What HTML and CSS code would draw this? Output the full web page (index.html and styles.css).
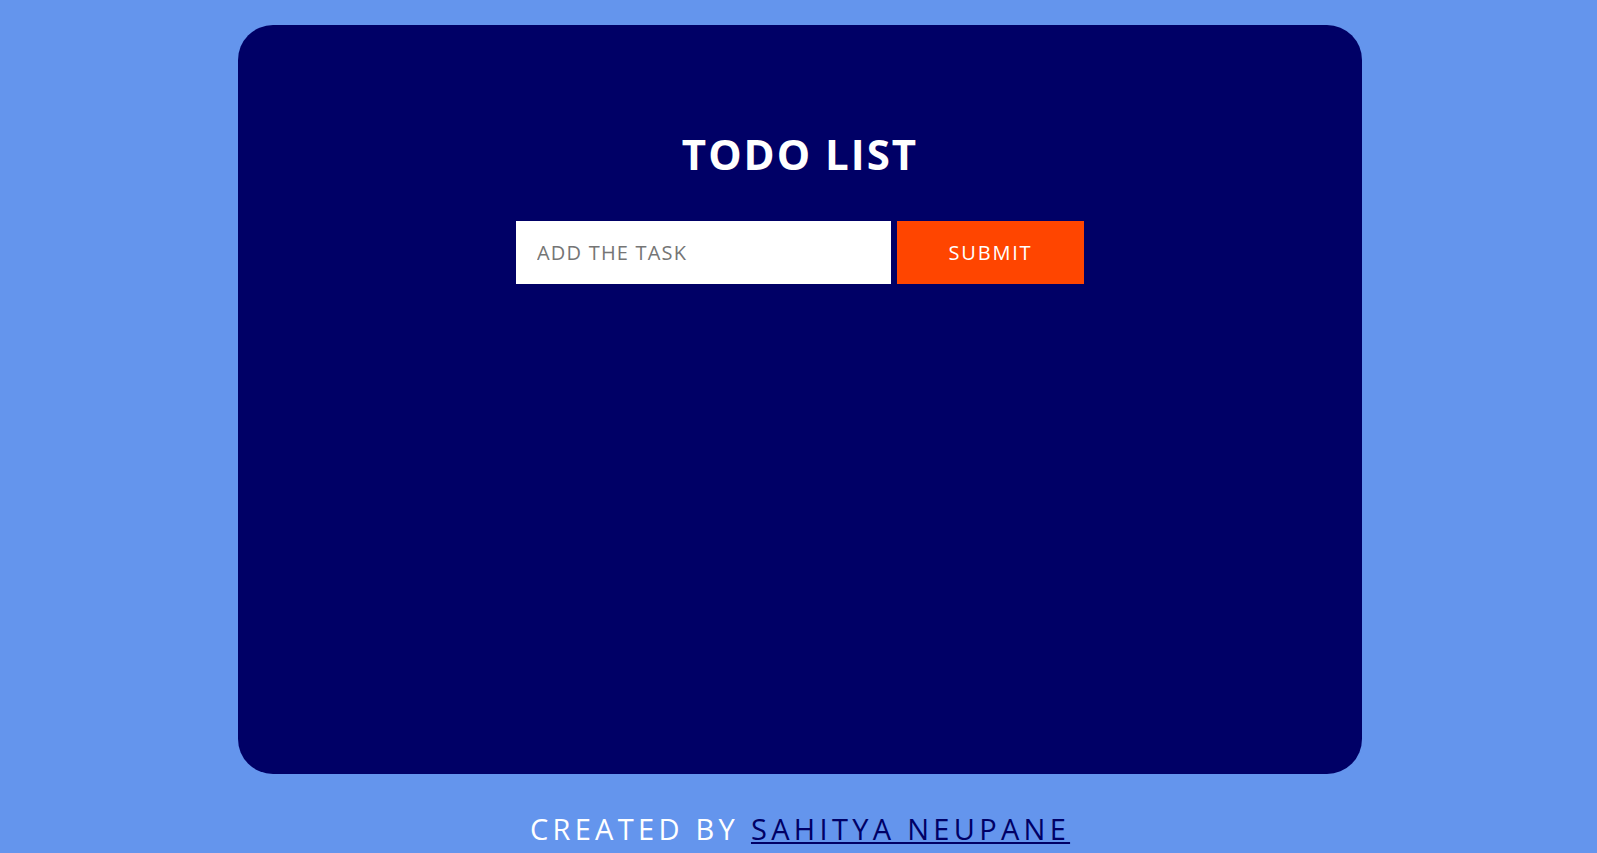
FILE: index.html
```html
<!DOCTYPE html>
<html>
<head>
<meta charset="utf-8">
<title>Todo List</title>
<link rel="stylesheet" href="styles.css">
</head>
<body>
<main class="card">
  <h1 class="title">TODO LIST</h1>
  <form class="task-form">
    <input class="task-input" type="text" placeholder="ADD THE TASK">
    <button class="task-submit" type="button">SUBMIT</button>
  </form>
</main>
<footer class="footer">CREATED BY <a class="author" href="#">SAHITYA NEUPANE</a></footer>
</body>
</html>
```
FILE: styles.css
```css
html, body {
  margin: 0;
  padding: 0;
}
body {
  background: #6495ed;
  font-family: "Comic Sans MS", "Open Sans", sans-serif;
  color: #fff;
}
.card {
  box-sizing: border-box;
  width: 1124px;
  height: 749px;
  margin: 25px 0 0 238px;
  background: #000066;
  border-radius: 35px;
  padding-top: 105px;
  display: flex;
  flex-direction: column;
  align-items: center;
}
.title {
  margin: 0;
  font-size: 42px;
  line-height: 48px;
  font-weight: 700;
  letter-spacing: 2px;
  color: #fff;
}
.task-form {
  margin-top: 43px;
  display: flex;
  gap: 6px;
}
.task-input {
  box-sizing: border-box;
  width: 375px;
  height: 63px;
  border: none;
  outline: none;
  padding: 0 21px;
  font-family: inherit;
  font-size: 20px;
  letter-spacing: 1.2px;
  background: #fff;
  color: #333;
}
.task-input::placeholder {
  color: #757575;
}
.task-submit {
  box-sizing: border-box;
  width: 187px;
  height: 63px;
  border: none;
  background: #ff4500;
  color: #fff;
  font-family: inherit;
  font-size: 20px;
  letter-spacing: 1.8px;
  padding: 0;
}
.footer {
  text-align: center;
  padding-left: 3px;
  margin-top: 35px;
  font-size: 29px;
  line-height: 40px;
  letter-spacing: 4.3px;
  color: #fff;
}
.author {
  color: #000066;
}
```
